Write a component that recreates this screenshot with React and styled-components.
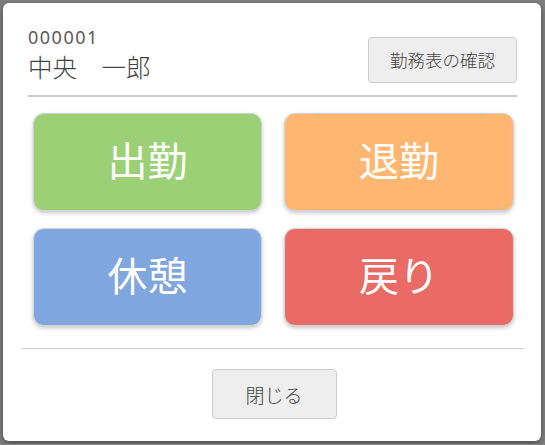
import styled, { createGlobalStyle } from "styled-components";

const GlobalStyle = createGlobalStyle`
  html, body {
    margin: 0;
    padding: 0;
    background: #808080;
  }
  body {
    font-family: "Noto Sans", "Noto Sans CJK JP", sans-serif;
  }
`;

const actions = [
  { label: "出勤", color: "#9bd077" },
  { label: "退勤", color: "#ffb670" },
  { label: "休憩", color: "#7fa6de" },
  { label: "戻り", color: "#ea6b65" },
];

export default function App() {
  return (
    <>
      <GlobalStyle />
      <Modal>
        <Header>
          <Who>
            <EmployeeId>000001</EmployeeId>
            <EmployeeName>中央　一郎</EmployeeName>
          </Who>
          <GrayButton>勤務表の確認</GrayButton>
        </Header>

        <ActionGrid>
          {actions.map((a) => (
            <ActionButton key={a.label} $color={a.color}>
              {a.label}
            </ActionButton>
          ))}
        </ActionGrid>

        <Footer>
          <CloseButton>閉じる</CloseButton>
        </Footer>
      </Modal>
    </>
  );
}

const Modal = styled.div`
  margin: 3px;
  width: 538px;
  height: 438px;
  box-sizing: border-box;
  background: #fff;
  border-radius: 6px;
  box-shadow: 0 2px 6px rgba(0, 0, 0, 0.45);
  padding-top: 23px;
  display: flex;
  flex-direction: column;
`;

const Header = styled.div`
  display: flex;
  justify-content: space-between;
  align-items: center;
  margin: 0 24px 0 25px;
  padding-bottom: 10px;
  border-bottom: 2px solid #cccccc;
`;

const Who = styled.div`
  display: flex;
  flex-direction: column;
`;

const EmployeeId = styled.div`
  font-family: "Noto Sans", sans-serif;
  font-size: 18px;
  line-height: 22px;
  letter-spacing: 1.5px;
  color: #5a5a5a;
`;

const EmployeeName = styled.div`
  font-family: "Noto Sans CJK JP", sans-serif;
  font-weight: 300;
  font-size: 24.5px;
  line-height: 37px;
  color: #444;
`;

const GrayButton = styled.button`
  width: 149px;
  height: 46px;
  margin-top: 8px;
  background: #eeeeee;
  border: 1px solid #cccccc;
  border-radius: 4px;
  font-family: "Noto Sans CJK JP", sans-serif;
  font-weight: 300;
  font-size: 17.5px;
  color: #444;
  padding: 0;
`;

const ActionGrid = styled.div`
  display: grid;
  grid-template-columns: 229px 230px;
  grid-auto-rows: 98px;
  column-gap: 22px;
  row-gap: 17px;
  margin: 16px 27px 0 30px;
`;

const ActionButton = styled.button`
  background: ${(p) => p.$color};
  border: 1px solid #d4d4d4;
  border-radius: 11px;
  box-shadow: 0 2px 4px rgba(0, 0, 0, 0.22);
  color: #fff;
  font-family: "Noto Sans CJK JP", sans-serif;
  font-weight: 400;
  font-size: 40px;
  padding: 0 0 6px;
`;

const Footer = styled.div`
  margin: 22px 17px 0 19px;
  border-top: 1px solid #cccccc;
  padding-top: 20px;
  display: flex;
  justify-content: center;
`;

const CloseButton = styled.button`
  width: 125px;
  height: 50px;
  margin-left: 2px;
  background: #eeeeee;
  border: 1px solid #cccccc;
  border-radius: 4px;
  font-family: "Noto Sans CJK JP", sans-serif;
  font-weight: 300;
  font-size: 19px;
  color: #444;
  padding: 0;
`;
